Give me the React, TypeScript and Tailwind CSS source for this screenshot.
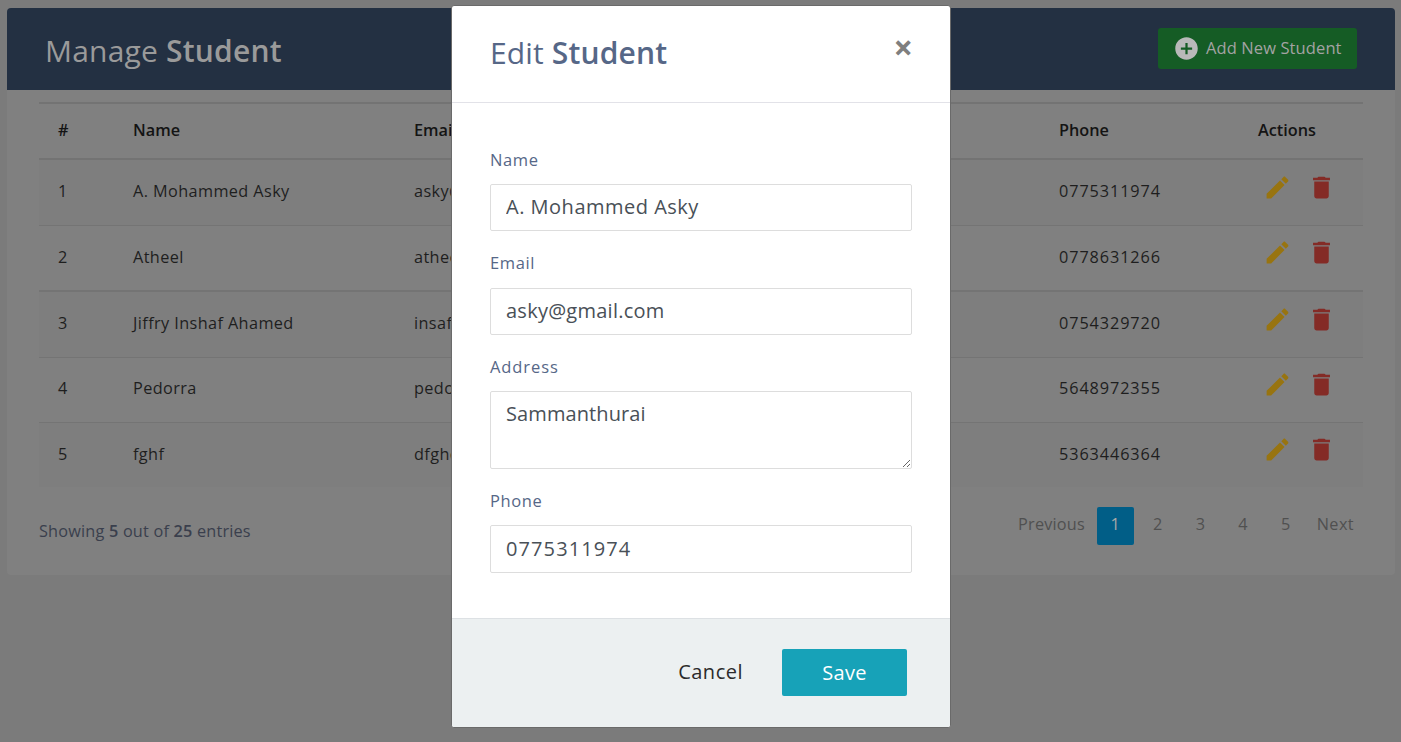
import React from 'react';

const font = { fontFamily: '"Open Sans", sans-serif' };

const students = [
  { id: 1, name: 'A. Mohammed Asky', email: 'asky@gmail.com', address: 'Sammanthurai', phone: '0775311974' },
  { id: 2, name: 'Atheel', email: 'atheel@gmail.com', address: 'Kalmunai', phone: '0778631266' },
  { id: 3, name: 'Jiffry Inshaf Ahamed', email: 'insaf@gmail.com', address: 'Ampara', phone: '0754329720' },
  { id: 4, name: 'Pedorra', email: 'pedorra@gmail.com', address: 'No 25, Main Street, Block 25', phone: '5648972355' },
  { id: 5, name: 'fghf', email: 'dfghdf@gmail.com', address: 'dfgdfg', phone: '5363446364' },
];

const PlusIcon = () => (
  <svg width="27" height="27" viewBox="0 0 24 24" fill="#b9b9b9">
    <path d="M12 2C6.48 2 2 6.48 2 12s4.48 10 10 10 10-4.48 10-10S17.52 2 12 2zm5 11h-4v4h-2v-4H7v-2h4V7h2v4h4v2z" />
  </svg>
);

const EditIcon = () => (
  <svg width="29" height="29" viewBox="0 0 24 24" fill="#987410">
    <path d="M3 17.25V21h3.75L17.81 9.94l-3.75-3.75L3 17.25zM20.71 7.04c.39-.39.39-1.02 0-1.41l-2.34-2.34c-.39-.39-1.02-.39-1.41 0l-1.83 1.83 3.75 3.75 1.83-1.83z" />
  </svg>
);

const TrashIcon = () => (
  <svg width="29" height="29" viewBox="0 0 24 24" fill="#842b26">
    <path d="M6 19c0 1.1.9 2 2 2h8c1.1 0 2-.9 2-2V7H6v12zM19 4h-3.5l-1-1h-5l-1 1H5v2h14V4z" />
  </svg>
);

const Field = ({ label, value, className, inputClass }: { label: string; value: string; className: string; inputClass: string }) => (
  <div className={className}>
    <label className="block text-[16.5px] leading-[24px] text-[#566787] tracking-[0.6px]">{label}</label>
    <input
      readOnly
      defaultValue={value}
      style={font}
      className={`block w-[422px] rounded-[2px] border border-[#dddddd] px-[15px] pb-[2px] text-[20px] text-[#495057] outline-none ${inputClass}`}
    />
  </div>
);

export default function App() {
  return (
    <div style={font} className="relative h-[742px] w-full overflow-hidden bg-[#7b7b7b] pt-[8px] pl-[7px] pr-[6px]">
      <div className="h-[567px] rounded-[4px] bg-[#808080]">
        <div className="flex h-[82px] items-start justify-between rounded-t-[4px] bg-[#233042] pl-[38px] pr-[38px]">
          <h2 className="mt-[22px] text-[30px] leading-[42px] text-[#9a9a9a] tracking-[0.2px]">
            Manage <b className="font-semibold">Student</b>
          </h2>
          <button className="mt-[20px] flex h-[41px] w-[199px] items-center rounded-[3px] bg-[#155c25] pl-[15px] text-[16.5px] text-[#a3a3a3] tracking-[0.1px]">
            <PlusIcon />
            <span className="ml-[6px]">Add New Student</span>
          </button>
        </div>

        <div className="px-[32px] pt-[12px]">
          <table className="w-[1324px] table-fixed border-t-2 border-[#737373] text-[16.25px] text-[#1e1e1e] tracking-[0.4px]">
            <thead>
              <tr className="h-[56px] border-b-2 border-[#737373] text-left text-[#141414] tracking-[0px]">
                <th className="w-[75px] pb-[2px] pl-[19px] font-semibold">#</th>
                <th className="w-[281px] pb-[2px] pl-[19px] font-semibold">Name</th>
                <th className="w-[285px] pb-[2px] pl-[19px] font-semibold">Email</th>
                <th className="w-[360px] pb-[2px] pl-[19px] font-semibold">Address</th>
                <th className="w-[199px] pb-[2px] pl-[19px] font-semibold">Phone</th>
                <th className="pb-[2px] pl-[19px] font-semibold">Actions</th>
              </tr>
            </thead>
            <tbody>
              {students.map((s, i) => (
                <tr
                  key={s.id}
                  className={`${i < 3 ? 'h-[66px]' : 'h-[65px]'} ${
                    i === 1 ? 'border-b-2 border-[#747474]' : i < students.length - 1 ? 'border-b border-[#747474]' : ''
                  } ${i % 2 === 0 ? 'bg-[#7e7e7e]' : 'bg-[#808080]'}`}
                >
                  <td className="pb-[2px] pl-[19px]">{s.id}</td>
                  <td className="pb-[2px] pl-[19px]">{s.name}</td>
                  <td className="pb-[2px] pl-[19px]">{s.email}</td>
                  <td className="pb-[2px] pl-[19px]">{s.address}</td>
                  <td className="pb-[2px] pl-[19px] tracking-[0.9px]">{s.phone}</td>
                  <td className="pb-[2px] pl-[24px]">
                    <div className="mb-[8px] flex gap-[15px]">
                      <EditIcon />
                      <TrashIcon />
                    </div>
                  </td>
                </tr>
              ))}
            </tbody>
          </table>

          <div className="mt-[20px] flex items-start justify-between">
            <div className="mt-[12px] text-[16.25px] leading-[24px] text-[#3a3f4d] tracking-[0.2px]">
              Showing <b className="font-semibold">5</b> out of <b className="font-semibold">25</b> entries
            </div>
            <div className="mr-[9px] flex h-[38px] items-center text-[16.25px] text-[#505050] tracking-[0.4px]">
              <span className="mr-[12px] pb-[4px] tracking-[0.2px]">Previous</span>
              <span className="flex h-[38px] w-[37px] items-center justify-center rounded-[2px] bg-[#015e87] pb-[4px] text-[#a8a8a8]">1</span>
              <span className="ml-[19px] pb-[4px]">2</span>
              <span className="ml-[33px] pb-[4px]">3</span>
              <span className="ml-[33px] pb-[4px]">4</span>
              <span className="ml-[33px] pb-[4px]">5</span>
              <span className="ml-[26px] pb-[4px]">Next</span>
            </div>
          </div>
        </div>
      </div>

      {/* dialog */}
      <div className="absolute left-[451px] top-[5px] flex h-[723px] w-[500px] flex-col overflow-hidden rounded-[3px] border border-[#6a6a6a] bg-white">
        <div className="relative h-[97px] shrink-0 border-b border-[#e2e2e8] pl-[38px]">
          <h4 className="pt-[25px] text-[30px] leading-[44px] text-[#566787] tracking-[0.15px]">
            Edit <b className="font-semibold">Student</b>
          </h4>
          <span className="absolute right-[37px] top-[21px] text-[34px] font-bold leading-[40px] text-[#7f7f7f]">×</span>
        </div>

        <div className="flex-1 px-[38px] pt-[45px]">
          <Field label="Name" value="A. Mohammed Asky" className="" inputClass="mt-[12px] h-[47px] tracking-[0.5px]" />
          <Field label="Email" value="asky@gmail.com" className="mt-[20px]" inputClass="mt-[13px] h-[47px] tracking-[0.25px]" />
          <div className="mt-[20px]">
            <label className="block text-[16.5px] leading-[24px] text-[#566787] tracking-[0.9px]">Address</label>
            <textarea
              readOnly
              defaultValue="Sammanthurai"
              style={font}
              className="mt-[12px] block h-[78px] w-[422px] rounded-[2px] border border-[#dddddd] px-[15px] pt-[7px] text-[20px] text-[#495057] tracking-[0.1px] outline-none"
            />
          </div>
          <Field label="Phone" value="0775311974" className="mt-[20px]" inputClass="mt-[12px] h-[48px] tracking-[1.1px]" />
        </div>

        <div className="flex h-[109px] shrink-0 items-start justify-end border-t border-[#dde1e4] bg-[#ecf0f1] pr-[43px] pt-[30px]">
          <span className="mr-[39px] mt-[9px] text-[20px] leading-[28px] text-[#2b2b2b] tracking-[0.5px]">Cancel</span>
          <button className="h-[47px] w-[125px] rounded-[2px] bg-[#17a2b8] text-[20px] font-medium text-white tracking-[0.3px]">Save</button>
        </div>
      </div>
    </div>
  );
}
